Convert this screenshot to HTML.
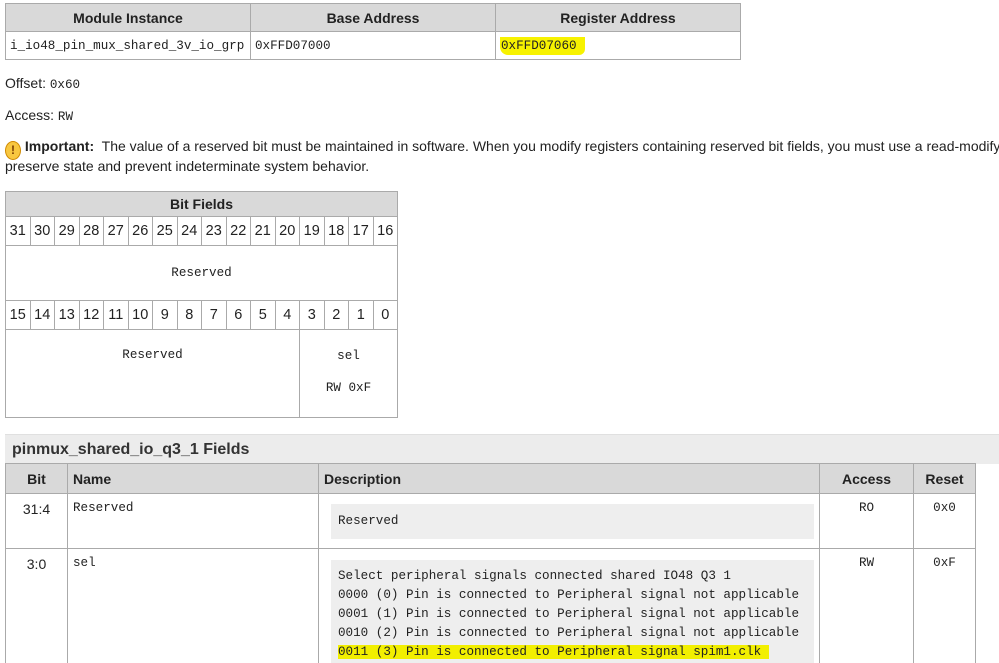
<!DOCTYPE html>
<html><head><meta charset="utf-8"><style>
html,body{margin:0;padding:0}
body{width:999px;height:663px;overflow:hidden;background:#fff;font-family:"Liberation Sans",Arial,sans-serif;font-size:14px;color:#222;position:relative}
.a{position:absolute;box-sizing:border-box}
.m{font-family:"Liberation Mono",monospace;font-size:12.6px}
table{border-collapse:collapse;position:absolute}
td,th{border:1px solid #aaa;box-sizing:border-box;padding:0}
th{background:#d9d9d9;font-weight:bold;font-size:14px}
.bt td{text-align:center;font-size:14.5px;width:24.5px}
</style></head><body>

<table style="left:5px;top:3px;width:736px">
<tr style="height:28px"><th style="width:245px">Module Instance</th><th style="width:245px">Base Address</th><th>Register Address</th></tr>
<tr style="height:28px"><td class="m" style="padding-left:4px">i_io48_pin_mux_shared_3v_io_grp</td><td class="m" style="padding-left:4px">0xFFD07000</td><td class="m" style="padding-left:4px"><span style="background:#f7f200;padding:2px 8px 2px 1px;border-radius:0 0 6px 8px">0xFFD07060</span></td></tr>
</table>

<div class="a" style="left:5px;top:75px">Offset: <span class="m">0x60</span></div>
<div class="a" style="left:5px;top:107px">Access: <span class="m">RW</span></div>
<div class="a" style="left:0;top:134px;width:999px;height:26px;overflow:hidden;white-space:nowrap;padding:4px 0 0 5px"><span style="display:inline-block;width:16px;height:19px;border-radius:50%;background:#f8c740;border:1px solid #d08a00;box-sizing:border-box;text-align:center;font-weight:bold;font-size:12px;line-height:17px;vertical-align:-3px;color:#7a3c00">!</span> <b>Important:</b>&nbsp; The value of a reserved bit must be maintained in software. When you modify registers containing reserved bit fields, you must use a read-modify-write operation to</div>
<div class="a" style="left:5px;top:158px">preserve state and prevent indeterminate system behavior.</div>

<table class="bt" style="left:5px;top:191px;width:393px">
<tr style="height:25px"><th colspan="16">Bit Fields</th></tr>
<tr style="height:29px"><td>31</td><td>30</td><td>29</td><td>28</td><td>27</td><td>26</td><td>25</td><td>24</td><td>23</td><td>22</td><td>21</td><td>20</td><td>19</td><td>18</td><td>17</td><td>16</td></tr>
<tr style="height:55px"><td colspan="16" class="m" style="font-size:12.6px">Reserved</td></tr>
<tr style="height:29px"><td>15</td><td>14</td><td>13</td><td>12</td><td>11</td><td>10</td><td>9</td><td>8</td><td>7</td><td>6</td><td>5</td><td>4</td><td>3</td><td>2</td><td>1</td><td>0</td></tr>
<tr style="height:88px"><td colspan="12" class="m" style="font-size:12.6px;vertical-align:top;padding-top:18px">Reserved</td><td colspan="4" class="m" style="font-size:12.6px;vertical-align:top;padding-top:10px;line-height:32px">sel<br>RW 0xF</td></tr>
</table>

<div class="a" style="left:5px;top:434px;width:994px;height:30px;background:#ececec;border-top:1px solid #e0e0e0;font-size:16px;font-weight:bold;padding:6px 0 0 7px;color:#333">pinmux_shared_io_q3_1 Fields</div>

<div class="a" style="left:0;top:463px;width:999px;height:200px;overflow:hidden">
<table style="left:5px;top:0;width:971px">
<tr style="height:30px"><th style="width:62px;text-align:center">Bit</th><th style="width:251px;text-align:left;padding-left:5px">Name</th><th style="width:501px;text-align:left;padding-left:5px">Description</th><th style="width:94px">Access</th><th>Reset</th></tr>
<tr style="height:55px;vertical-align:top"><td style="text-align:center;padding-top:7px">31:4</td><td class="m" style="padding:7px 5px">Reserved</td><td style="padding:10px 5px 9px 12px"><div class="m" style="background:#eee;height:35px;padding:10px 7px;box-sizing:border-box">Reserved</div></td><td class="m" style="text-align:center;padding-top:7px">RO</td><td class="m" style="text-align:center;padding-top:7px">0x0</td></tr>
<tr style="height:130px;vertical-align:top"><td style="text-align:center;padding-top:7px">3:0</td><td class="m" style="padding:7px 5px">sel</td><td style="padding:11px 5px 0 12px"><div class="m" style="background:#eee;height:120px;padding:7px 7px;box-sizing:border-box;line-height:19px;white-space:pre">Select peripheral signals connected shared IO48 Q3 1
0000 (0) Pin is connected to Peripheral signal not applicable
0001 (1) Pin is connected to Peripheral signal not applicable
0010 (2) Pin is connected to Peripheral signal not applicable
<span style="background:#f2ef00;padding-right:8px">0011 (3) Pin is connected to Peripheral signal spim1.clk</span></div></td><td class="m" style="text-align:center;padding-top:7px">RW</td><td class="m" style="text-align:center;padding-top:7px">0xF</td></tr>
</table>
</div>
</body></html>
